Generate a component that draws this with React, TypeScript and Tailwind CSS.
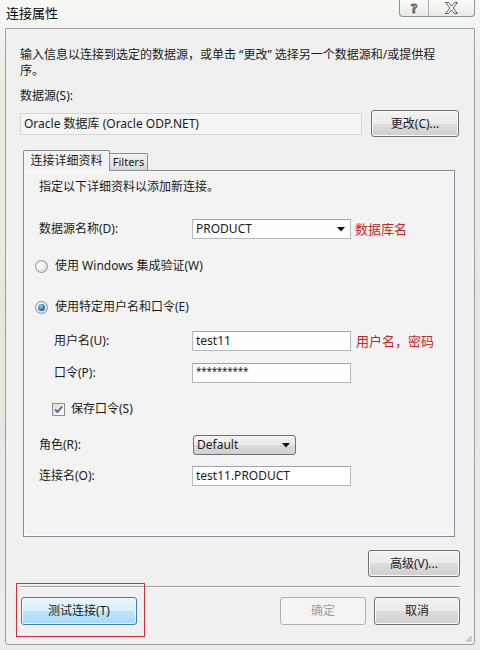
import React from "react";

const btn =
  "flex items-center justify-center rounded-[3px] border border-[#707070] bg-[linear-gradient(to_bottom,#f2f2f2_0%,#ebebeb_50%,#dddddd_50%,#cfcfcf_100%)] shadow-[inset_0_0_0_1px_#fbfbfb] text-[#1b1b1b]";

const tb =
  "h-[20px] w-[159px] border border-[#b5b9c0] border-t-[#9fa3aa] bg-white pl-[3px] flex items-center text-[12px] text-[#1b1b1b]";

function Radio({ checked }: { checked?: boolean }) {
  return (
    <div className="w-[13px] h-[13px] rounded-full border border-[#8e8f8f] bg-[radial-gradient(circle_at_35%_35%,#ffffff_0%,#e6e6e6_60%,#cfcfcf_100%)] flex items-center justify-center">
      {checked && (
        <div className="w-[7px] h-[7px] rounded-full bg-[radial-gradient(circle_at_40%_35%,#9fd5f5_0%,#2a76b8_55%,#174a7c_100%)]" />
      )}
    </div>
  );
}

function Arrow() {
  return (
    <svg width="8" height="5" viewBox="0 0 8 5">
      <path d="M0 0 H8 L4 4.5 Z" fill="#111" />
    </svg>
  );
}

export default function App() {
  return (
    <div
      className="relative w-[480px] h-[650px] overflow-hidden flex flex-col px-[5px] bg-[linear-gradient(to_bottom,#f7f9f4_0%,#e9eee5_12%,#e4e9e0_60%,#eceee9_100%)] text-[12px] leading-[16px] text-[#1b1b1b]"
      style={{ fontFamily: '"Noto Sans", "Noto Sans CJK SC", sans-serif' }}
    >
      {/* title bar */}
      <div className="h-[28px] flex items-start justify-between shrink-0">
        <div className="pl-[1px] pt-[5px] text-[13px] leading-[16px] text-black [text-shadow:0_0_6px_#ffffff,0_0_3px_#ffffff]">
          连接属性
        </div>
        <div className="flex h-[17px] border border-t-0 border-[#8d9297] rounded-b-[4px] bg-[linear-gradient(to_bottom,#fbfcfa,#e7ebe4)]">
          <div className="w-[29px] flex items-center justify-center border-r border-[#a9adb1]">
            <span className="text-[12px] leading-[13px] font-bold text-white [-webkit-text-stroke:1px_#505050]">?</span>
          </div>
          <div className="w-[45px] flex items-center justify-center">
            <svg width="15" height="12" viewBox="0 0 15 12">
              <path
                d="M1.5 0.5 H4.5 L7.5 4 L10.5 0.5 H13.5 L9 6 L13.5 11.5 H10.5 L7.5 8 L4.5 11.5 H1.5 L6 6 Z"
                fill="#ffffff"
                stroke="#555"
                strokeWidth="1"
                strokeLinejoin="round"
              />
            </svg>
          </div>
        </div>
      </div>

      {/* client area */}
      <div className="flex-1 mb-[5px] border border-[#9aa0a6] rounded-b-[3px] bg-[#f0f0f0] flex flex-col pl-[14px] pr-[14px] pt-[18px]">
        <div>
          输入信息以连接到选定的数据源，或单击 “更改” 选择另一个数据源和/或提供程
          <br />
          序。
        </div>
        <div className="mt-[9px]">数据源(S):</div>
        <div className="mt-[6px] flex items-center">
          <div className="h-[22px] w-[342px] border border-[#d6d6d6] bg-[#f4f4f4] flex items-center pl-[3px]">
            Oracle 数据库 (Oracle ODP.NET)
          </div>
          <div className={btn + " ml-[9px] w-[88px] h-[27px]"}>更改(C)...</div>
        </div>

        {/* tabs */}
        <div className="mt-[13px] ml-[3px] flex items-end">
          <div className="relative z-10 -mb-px h-[21px] w-[87px] border border-b-0 border-[#898c95] bg-[#f3f3f3] flex items-center justify-center rounded-t-[2px]">
            连接详细资料
          </div>
          <div className="h-[17px] w-[38px] border border-l-0 border-b-0 border-[#898c95] bg-[linear-gradient(to_bottom,#f2f2f2,#d8d8d8)] flex items-center justify-center text-[11px] rounded-tr-[2px]">
            Filters
          </div>
        </div>
        <div className="ml-[3px] mr-[5px] h-[367px] border border-[#898c95] bg-[#f3f3f3] shadow-[inset_0_0_0_1px_#fbfbfb] pl-[15px] pt-[8px] flex flex-col">
          <div>指定以下详细资料以添加新连接。</div>

          <div className="mt-[24px] flex items-center h-[20px]">
            <div className="w-[153px]">数据源名称(D):</div>
            <div className={tb + " justify-between pr-[5px]"}>
              <span>PRODUCT</span>
              <Arrow />
            </div>
            <div className="ml-[4px] text-[13px] text-[#c2272d]">数据库名</div>
          </div>

          <div className="mt-[19px] -ml-[4px] flex items-center h-[16px]">
            <Radio />
            <span className="ml-[7px]">使用 Windows 集成验证(W)</span>
          </div>

          <div className="mt-[25px] -ml-[4px] flex items-center h-[16px]">
            <Radio checked />
            <span className="ml-[7px]">使用特定用户名和口令(E)</span>
          </div>

          <div className="mt-[16px] flex items-center h-[20px]">
            <div className="w-[153px] pl-[15px]">用户名(U):</div>
            <div className={tb}>test11</div>
            <div className="ml-[5px] text-[13px] text-[#c2272d]">用户名，密码</div>
          </div>

          <div className="mt-[12px] flex items-center h-[20px]">
            <div className="w-[153px] pl-[15px]">口令(P):</div>
            <div className={tb + " items-start pt-[1px]"}>
              <span className="text-[10px] leading-[12px] tracking-[-0.3px]">**********</span>
            </div>
          </div>

          <div className="mt-[18px] ml-[13px] flex items-center h-[16px]">
            <div className="w-[13px] h-[13px] border border-[#8e8f8f] bg-[linear-gradient(135deg,#dcdcdc,#fbfbfb)] flex items-center justify-center">
              <svg width="9" height="9" viewBox="0 0 9 9">
                <path d="M1 4.5 L3.5 7 L8 1.5" fill="none" stroke="#4a5f8a" strokeWidth="1.8" />
              </svg>
            </div>
            <span className="ml-[6px]">保存口令(S)</span>
          </div>

          <div className="mt-[18px] flex items-center h-[20px]">
            <div className="w-[154px]">角色(R):</div>
            <div className="h-[20px] w-[103px] rounded-[3px] border border-[#707070] bg-[linear-gradient(to_bottom,#f2f2f2_0%,#ebebeb_50%,#dddddd_50%,#cfcfcf_100%)] flex items-center justify-between pl-[3px] pr-[5px]">
              <span>Default</span>
              <Arrow />
            </div>
          </div>

          <div className="mt-[11px] flex items-center h-[20px]">
            <div className="w-[153px]">连接名(O):</div>
            <div className={tb}>test11.PRODUCT</div>
          </div>
        </div>

        <div className="mt-[13px] flex justify-end">
          <div className={btn + " w-[92px] h-[27px]"}>高级(V)...</div>
        </div>

        <div className="mt-[9px] h-[2px] border-t border-[#a0a0a0] border-b border-b-white" />

        <div className="mt-[9px] flex items-center">
          <div className="ml-[1px] w-[116px] h-[28px] rounded-[3px] border border-[#3c7fb1] bg-[linear-gradient(to_bottom,#eaf6fd_0%,#d9f0fc_50%,#bee6fd_50%,#a7d9f5_100%)] shadow-[inset_0_0_0_1px_#f4fbff] flex items-center justify-center">
            测试连接(T)
          </div>
          <div className="ml-auto w-[86px] h-[28px] rounded-[3px] border border-[#adb2b5] bg-[#f4f4f4] text-[#9d9d9d] flex items-center justify-center">
            确定
          </div>
          <div className={btn + " ml-[8px] w-[86px] h-[28px]"}>取消</div>
        </div>

        <div className="flex-1" />
        <div className="flex justify-end pr-0 pb-[2px] -mr-[12px]">
          <svg width="6" height="6" viewBox="0 0 6 6">
            <rect x="4" y="0" width="1.5" height="1.5" fill="#b0b0b0" />
            <rect x="2" y="2" width="1.5" height="1.5" fill="#b0b0b0" />
            <rect x="4" y="2" width="1.5" height="1.5" fill="#b0b0b0" />
            <rect x="0" y="4" width="1.5" height="1.5" fill="#b0b0b0" />
            <rect x="2" y="4" width="1.5" height="1.5" fill="#b0b0b0" />
            <rect x="4" y="4" width="1.5" height="1.5" fill="#b0b0b0" />
          </svg>
        </div>
      </div>

      {/* red annotation rectangle */}
      <div className="absolute left-[16px] top-[583px] w-[129px] h-[54px] border border-[#cf2f3a] pointer-events-none" />
    </div>
  );
}
